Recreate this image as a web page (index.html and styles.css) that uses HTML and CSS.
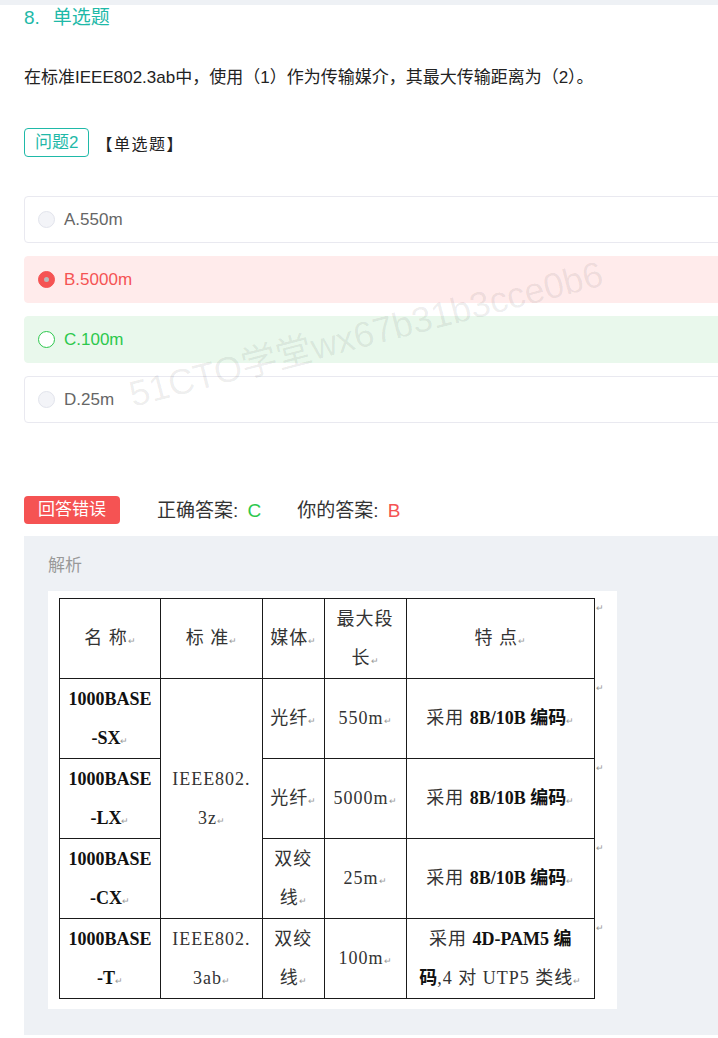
FILE: index.html
```html
<!DOCTYPE html>
<html lang="zh-CN">
<head>
  <meta charset="UTF-8" />
  <meta name="viewport" content="width=device-width, initial-scale=1.0"/>
  <title>单选题</title>
  <link rel="stylesheet" href="styles.css">
</head>
<body>

<div class="top-strip"></div>

<div class="question">
  <div class="q-title"><span class="q-num">8.</span>单选题</div>

  <p class="q-text">在标准IEEE802.3ab中，使用（1）作为传输媒介，其最大传输距离为（2）。</p>

  <div class="q-sub">
    <span class="q-tag">问题2</span>
    <span class="q-type">【单选题】</span>
  </div>

  <div class="options">
    <div class="option">
      <span class="radio"></span>
      <span>A.550m</span>
    </div>
    <div class="option wrong">
      <span class="radio"></span>
      <span>B.5000m</span>
    </div>
    <div class="option right">
      <span class="radio"></span>
      <span>C.100m</span>
    </div>
    <div class="option">
      <span class="radio"></span>
      <span>D.25m</span>
    </div>
  </div>

  <div class="result">
    <span class="badge">回答错误</span>
    <span class="ans">正确答案: <b class="green">C</b></span>
    <span class="ans">你的答案: <b class="red">B</b></span>
  </div>

  <div class="analysis">
    <div class="analysis-title">解析</div>
    <div class="pic">
      <table class="doc-table">
        <colgroup>
          <col style="width:101px">
          <col style="width:102px">
          <col style="width:62px">
          <col style="width:82px">
          <col style="width:189px">
          <col style="width:10px">
        </colgroup>
        <tr>
          <td>名 称<i>↵</i></td>
          <td>标 准<i>↵</i></td>
          <td>媒体<i>↵</i></td>
          <td>最大段<br>长<i>↵</i></td>
          <td>特 点<i>↵</i></td>
          <td class="mark">↵</td>
        </tr>
        <tr>
          <td class="b">1000BASE<br>-SX<i>↵</i></td>
          <td rowspan="3">IEEE802.<br>3z<i>↵</i></td>
          <td>光纤<i>↵</i></td>
          <td>550m<i>↵</i></td>
          <td>采用 <b>8B/10B 编码</b><i>↵</i></td>
          <td class="mark">↵</td>
        </tr>
        <tr>
          <td class="b">1000BASE<br>-LX<i>↵</i></td>
          <td>光纤<i>↵</i></td>
          <td>5000m<i>↵</i></td>
          <td>采用 <b>8B/10B 编码</b><i>↵</i></td>
          <td class="mark">↵</td>
        </tr>
        <tr>
          <td class="b">1000BASE<br>-CX<i>↵</i></td>
          <td>双绞<br>线<i>↵</i></td>
          <td>25m<i>↵</i></td>
          <td>采用 <b>8B/10B 编码</b><i>↵</i></td>
          <td class="mark">↵</td>
        </tr>
        <tr>
          <td class="b">1000BASE<br>-T<i>↵</i></td>
          <td>IEEE802.<br>3ab<i>↵</i></td>
          <td>双绞<br>线<i>↵</i></td>
          <td>100m<i>↵</i></td>
          <td>采用 <b>4D-PAM5 编</b><br><b>码</b>,4 对 UTP5 类线<i>↵</i></td>
          <td class="mark">↵</td>
        </tr>
      </table>
    </div>
  </div>

  <div class="watermark">51CTO学堂wx67b31b3cce0b6</div>
</div>

</body>
</html>
```

FILE: styles.css
```css
body {
  margin: 0;
  padding: 0;
  font-family: "Liberation Sans", Arial, "Noto Sans CJK SC", sans-serif;
  color: #333;
  background: #fff;
  overflow: hidden;
}

.top-strip {
  height: 5px;
  background-color: #eef1f5;
}

.question {
  position: relative;
  width: 760px;
  padding-left: 24px;
}

.q-title {
  font-size: 19px;
  line-height: 26px;
  color: #1fb9a8;
}

.q-num {
  margin-right: 13px;
}

.q-text {
  margin: 35px 0 0;
  font-size: 17px;
  line-height: 24px;
  color: #222;
}

.q-sub {
  margin-top: 38px;
  display: flex;
  align-items: center;
}

.q-tag {
  box-sizing: border-box;
  height: 29px;
  line-height: 27px;
  padding: 0 10px;
  border: 1px solid #1fb9a8;
  border-radius: 4px;
  color: #1fb9a8;
  font-size: 17px;
}

.q-type {
  margin-left: 7px;
  font-size: 16px;
  letter-spacing: 1.5px;
  color: #222;
}

.options {
  margin-top: 39px;
}

.option {
  box-sizing: border-box;
  height: 47px;
  margin-bottom: 13px;
  border: 1px solid #e9e9f0;
  border-radius: 4px;
  display: flex;
  align-items: center;
  padding-left: 13px;
  font-size: 17px;
  color: #666;
}

.radio {
  box-sizing: border-box;
  width: 17px;
  height: 17px;
  border-radius: 50%;
  border: 1px solid #e2e4ec;
  background: #f3f4f8;
  margin-right: 9px;
  position: relative;
}

.option.wrong {
  background: #ffebeb;
  border-color: #ffebeb;
  color: #f55353;
}

.option.wrong .radio {
  background: #f55353;
  border-color: #f55353;
}

.option.wrong .radio::after {
  content: "";
  position: absolute;
  left: 5px;
  top: 5px;
  width: 5px;
  height: 5px;
  border-radius: 50%;
  background: #b9b9b9;
}

.option.right {
  background: #e9f8ec;
  border-color: #e9f8ec;
  color: #2dc84d;
}

.option.right .radio {
  background: #fff;
  border: 1.5px solid #2dc84d;
}

.result {
  margin-top: 73px;
  display: flex;
  align-items: center;
  font-size: 19px;
}

.badge {
  height: 28px;
  line-height: 28px;
  padding: 0 14px;
  background: #f55353;
  color: #fff;
  border-radius: 4px;
  font-size: 17px;
}

.ans {
  margin-left: 37px;
  margin-top: -3px;
  color: #333;
}

.ans + .ans {
  margin-left: 36px;
}

.ans b {
  font-weight: normal;
  margin-left: 4px;
}

.green { color: #2dc84d; }
.red { color: #f55353; }

.analysis {
  margin-top: 12px;
  background: #eef1f5;
  padding: 18px 24px 26px;
}

.analysis-title {
  font-size: 17px;
  line-height: 24px;
  color: #999;
}

.pic {
  margin-top: 13px;
  width: 569px;
  box-sizing: border-box;
  background: #fff;
  padding: 7px 11px 10px 11px;
}

.doc-table {
  border-collapse: collapse;
  table-layout: fixed;
  font-family: "Liberation Serif", "Noto Sans CJK SC", serif;
  font-size: 18px;
  color: #333;
}

.doc-table td {
  border: 1px solid #1a1a1a;
  height: 78px;
  padding: 0 2px;
  line-height: 39px;
  text-align: center;
  vertical-align: middle;
  letter-spacing: 1px;
}

.doc-table td.b {
  font-weight: bold;
  color: #111;
  letter-spacing: 0;
}

.doc-table b {
  color: #111;
  letter-spacing: 0;
}

.doc-table i {
  font-style: normal;
  font-size: 9px;
  line-height: 0;
  color: #999;
  font-weight: normal;
  letter-spacing: 0;
}

.doc-table td.mark {
  border: none;
  vertical-align: top;
  text-align: left;
  font-size: 9px;
  line-height: 14px;
  color: #999;
  padding: 2px 0 0 1px;
}

.watermark {
  position: absolute;
  left: 133px;
  top: 372px;
  font-size: 36px;
  line-height: 1;
  white-space: nowrap;
  color: rgba(0, 0, 0, 0.07);
  transform-origin: 0 30px;
  transform: rotate(-14.5deg);
  pointer-events: none;
}
```
